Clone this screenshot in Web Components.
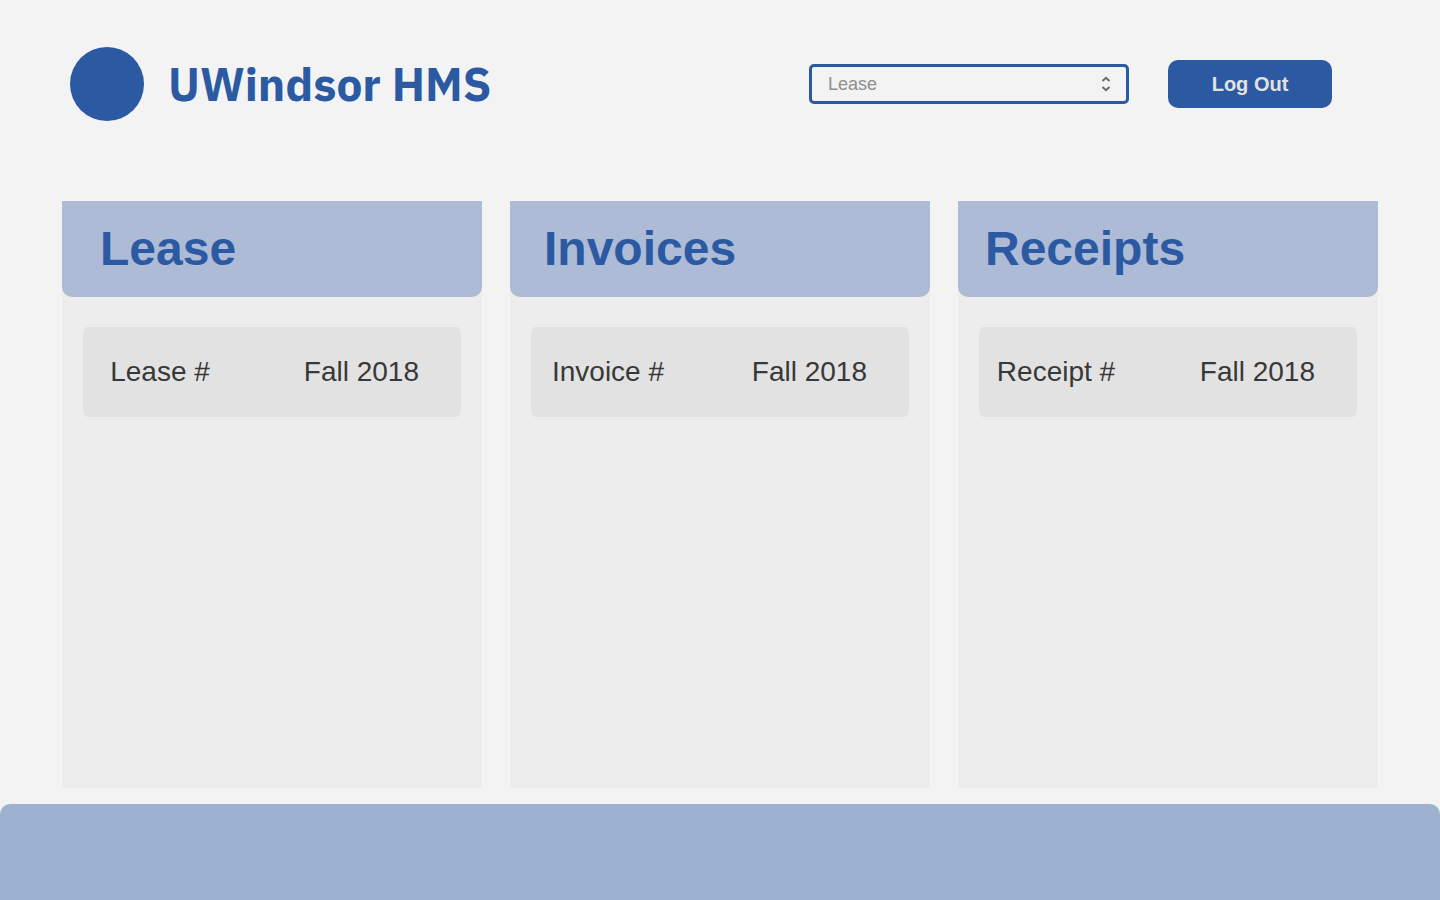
<!DOCTYPE html>
<html lang="en">
<head>
<meta charset="utf-8">
<meta name="viewport" content="width=device-width, initial-scale=1">
<title>UWindsor HMS</title>
<style>
  html { --brand: #2b5aa3; --page: #f3f3f3; }
  body { margin: 0; background: var(--page); font-family: "Liberation Sans", Arial, sans-serif; }
</style>
</head>
<body>
<hms-page>
  <hms-header slot="header" heading="UWindsor HMS"></hms-header>
  <hms-column heading="Lease" style="--title-inset: 38px">
    <hms-record><span>Lease #</span><span slot="term">Fall 2018</span></hms-record>
  </hms-column>
  <hms-column heading="Invoices" style="--title-inset: 34px">
    <hms-record><span>Invoice #</span><span slot="term">Fall 2018</span></hms-record>
  </hms-column>
  <hms-column heading="Receipts" style="--title-inset: 27px">
    <hms-record><span>Receipt #</span><span slot="term">Fall 2018</span></hms-record>
  </hms-column>
  <hms-footer slot="footer"></hms-footer>
</hms-page>

<template id="page">
  <style>
    :host { display: flex; flex-direction: column; min-height: 100vh; }
    main { flex: 1; display: grid; grid-template-columns: repeat(3, minmax(0, 1fr)); gap: 28px; padding: 0 62px 16px; }
  </style>
  <slot name="header"></slot>
  <main><slot></slot></main>
  <slot name="footer"></slot>
</template>

<template id="header">
  <style>
    :host { display: block; }
    header { display: flex; align-items: center; padding: 47px 108px 80px 70px; }
    .mark { width: 74px; height: 74px; border-radius: 50%; background: var(--brand); margin-right: 24px; flex: none; }
    h1 { margin: 0; flex: 1; color: var(--brand); font: bold 46px/64px "IBM Plex Sans", Roboto, sans-serif; white-space: nowrap; }
    hms-select { width: 320px; margin-right: 39px; }
    button { width: 164px; height: 48px; padding: 0; border: 0; border-radius: 10px; background: var(--brand); color: #e2e2e2; font: bold 20px/24px "Liberation Sans", Arial, sans-serif; cursor: pointer; }
  </style>
  <header>
    <div class="mark"></div>
    <h1></h1>
    <hms-select></hms-select>
    <button type="button">Log Out</button>
  </header>
</template>

<template id="select">
  <style>
    :host { display: block; }
    .field { display: grid; align-items: center; }
    select, svg { grid-area: 1 / 1; }
    select { appearance: none; box-sizing: border-box; width: 100%; height: 40px; margin: 0; padding: 0 40px 0 16px; border: 3px solid var(--brand); border-radius: 5px; background: transparent; color: #8f8f8f; font: 18px/24px "Liberation Sans", Arial, sans-serif; }
    option { color: #383838; }
    svg { justify-self: end; margin-right: 18px; pointer-events: none; }
  </style>
  <div class="field">
    <select aria-label="Section">
      <option>Lease</option>
      <option>Invoices</option>
      <option>Receipts</option>
    </select>
    <svg width="10" height="16" viewBox="0 0 10 16" fill="none" stroke="#6b6b6b" stroke-width="2" aria-hidden="true"><path d="M1.5 5 5 1.8 8.5 5M1.5 11 5 14.2 8.5 11"/></svg>
  </div>
</template>

<template id="column">
  <style>
    :host { display: block; background: #ededed; }
    h2 { margin: 0; padding: 16px 16px 16px var(--title-inset, 32px); border-radius: 0 0 10px 10px; background: #aebbd6; color: var(--brand); font-size: 48px; line-height: 64px; }
    .records { display: grid; gap: 16px; padding: 30px 21px; }
  </style>
  <section>
    <h2></h2>
    <div class="records"><slot></slot></div>
  </section>
</template>

<template id="record">
  <style>
    :host { display: flex; align-items: center; justify-content: space-between; padding: 29px 42px 29px 17px; border-radius: 5px; background: #e2e2e2; color: #383838; font-size: 28px; line-height: 32px; white-space: nowrap; }
    .name { min-width: 120px; text-align: center; }
  </style>
  <div class="name"><slot></slot></div>
  <div><slot name="term"></slot></div>
</template>

<template id="footer">
  <style>
    :host { display: block; }
    footer { height: 96px; border-radius: 10px 10px 0 0; background: #9db1d1; }
  </style>
  <footer></footer>
</template>

<script>
  class HmsElement extends HTMLElement {
    constructor() {
      super();
      const template = document.getElementById(this.localName.slice(4));
      this.attachShadow({ mode: "open" }).append(template.content.cloneNode(true));
    }
  }
  class HmsHeadedElement extends HmsElement {
    connectedCallback() {
      this.shadowRoot.querySelector("h1, h2").textContent = this.getAttribute("heading");
    }
  }
  customElements.define("hms-page", class extends HmsElement {});
  customElements.define("hms-select", class extends HmsElement {});
  customElements.define("hms-header", class extends HmsHeadedElement {});
  customElements.define("hms-column", class extends HmsHeadedElement {});
  customElements.define("hms-record", class extends HmsElement {});
  customElements.define("hms-footer", class extends HmsElement {});
</script>
</body>
</html>
